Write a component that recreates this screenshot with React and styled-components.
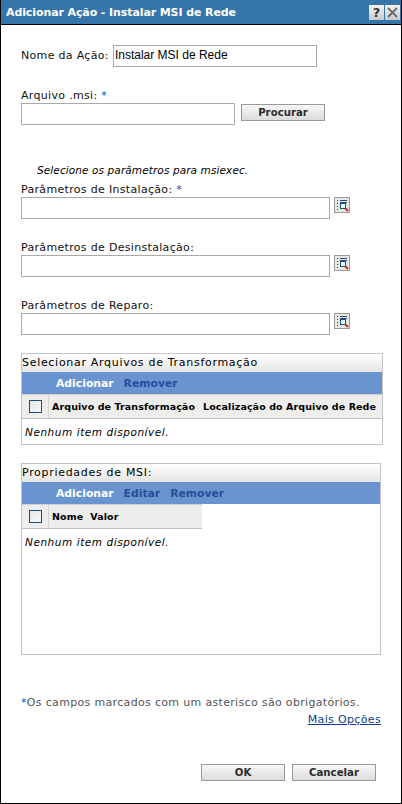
import React from 'react';
import styled, { createGlobalStyle } from 'styled-components';

const GlobalStyle = createGlobalStyle`
  html, body {
    margin: 0;
    padding: 0;
    background: #fff;
  }
  body {
    font-family: "DejaVu Sans", Verdana, sans-serif;
    font-size: 11px;
    color: #000;
  }
`;

const Dialog = styled.div`
  box-sizing: border-box;
  width: 402px;
  height: 804px;
  border: solid #000;
  border-width: 0 1px 1px 1px;
  background: #fff;
  display: flex;
  flex-direction: column;
`;

const TitleBar = styled.div`
  height: 24px;
  background: #3675a9;
  border-bottom: 1px solid #000;
  display: flex;
  align-items: center;
  justify-content: space-between;
  padding: 0 1px 0 5px;
  flex: none;
`;

const Title = styled.div`
  color: #fff;
  font-weight: bold;
  font-size: 11px;
  letter-spacing: -0.1px;
`;

const TitleButtons = styled.div`
  display: flex;
  gap: 1px;
`;

const TitleButton = styled.div`
  width: 15px;
  height: 15px;
  background: linear-gradient(#f4f4f4, #c9c9c9);
  display: flex;
  align-items: center;
  justify-content: center;
  color: #333;
  font-weight: bold;
  font-size: 13px;
`;

const Content = styled.div`
  flex: 1;
  padding: 20px 20px 0 20px;
  display: flex;
  flex-direction: column;
`;

const NameRow = styled.div`
  display: flex;
  align-items: center;
  gap: 4px;
  height: 22px;
`;

const Label = styled.div`
  line-height: 14px;
  height: 14px;
  margin-top: ${(p) => p.$top || 0}px;
  letter-spacing: 0.32px;
  color: #111;
`;

const Star = styled.span`
  color: #0a4fc4;
`;

const Input = styled.input`
  box-sizing: border-box;
  display: block;
  width: ${(p) => p.$width}px;
  height: 22px;
  border: 1px solid #a9a9a9;
  padding: 0 1px 3px;
  margin: 0;
  background: #fff;
  font-family: "Liberation Sans", Arial, sans-serif;
  font-size: 12px;
  color: #000;
  outline: none;
`;

const FieldRow = styled.div`
  display: flex;
  align-items: flex-start;
  gap: ${(p) => p.$gap || 4}px;
`;

const Button = styled.button`
  box-sizing: border-box;
  width: 84px;
  height: 17px;
  margin: ${(p) => p.$top || 0}px 0 0 0;
  padding: 0;
  border: 1px solid #999;
  background: linear-gradient(#f7f7f7, #dcdcdc);
  font-family: "DejaVu Sans", Verdana, sans-serif;
  font-size: 10.2px;
  font-weight: bold;
  color: #2c2c2c;
`;

const Hint = styled.div`
  font-style: italic;
  font-size: 10.5px;
  line-height: 14px;
  margin: 38px 0 6px 16px;
  letter-spacing: 0.1px;
`;

const Panel = styled.div`
  box-sizing: border-box;
  width: ${(p) => p.$width}px;
  height: ${(p) => p.$height}px;
  margin-top: ${(p) => p.$top}px;
  border: 1px solid #c4c4c4;
`;

const PanelTitle = styled.div`
  height: 18px;
  line-height: 18px;
  background: linear-gradient(#fff, #e4e4e2);
  letter-spacing: 0.7px;
  font-size: 11px;
`;

const ActionBar = styled.div`
  height: 22px;
  background: #6a94cf;
  display: flex;
  align-items: center;
  gap: 10px;
  padding-left: 34px;
  font-weight: bold;
  font-size: 10.8px;
`;

const Action = styled.span`
  color: ${(p) => (p.$active ? '#fff' : '#23509c')};
`;

const HeadRow = styled.div`
  box-sizing: border-box;
  width: ${(p) => p.$width || '100%'};
  height: 25px;
  display: flex;
  align-items: center;
  background: #ededeb;
  border-top: 1px solid #d0d0d0;
  border-bottom: 1px solid #c4c4c4;
  font-weight: bold;
  font-size: 9.5px;
  color: #000;
`;

const CheckCell = styled.div`
  box-sizing: border-box;
  width: 27px;
  height: 100%;
  flex: none;
  display: flex;
  align-items: center;
  justify-content: center;
  padding-left: 1px;
  border-right: 1px solid #d6d6d6;
`;

const CheckBox = styled.div`
  box-sizing: border-box;
  width: 13px;
  height: 13px;
  border: 1px solid #1f4e7a;
  background: linear-gradient(135deg, #e6e6e6, #f8f8f8);
`;

const HeadCell = styled.div`
  padding-left: 3px;
  margin-right: ${(p) => p.$gap || 0}px;
  white-space: nowrap;
  letter-spacing: 0.1px;
`;

const EmptyRow = styled.div`
  font-style: italic;
  font-size: 10.5px;
  padding: 6px 3px;
  line-height: 14px;
  letter-spacing: 0.55px;
`;

const Note = styled.div`
  margin-top: 41px;
  line-height: 14px;
  color: #555;
  letter-spacing: 0.33px;
`;

const LinkRow = styled.div`
  display: flex;
  justify-content: flex-end;
  width: 360px;
  margin-top: 3px;
`;

const MoreLink = styled.a`
  color: #0b3d91;
  text-decoration: underline;
  line-height: 14px;
  letter-spacing: 0.35px;
`;

const Footer = styled.div`
  display: flex;
  justify-content: flex-end;
  gap: 7px;
  width: 355px;
  margin-top: 37px;
`;

function LookupIcon() {
  return (
    <svg width="16" height="16" viewBox="0 0 16 16">
      <rect x="0.5" y="0.5" width="15" height="15" fill="#e9e9e3" stroke="#9a9a9a" />
      <path d="M3 3.5h1M3 6.5h1M3 9.5h1M3 12.5h1" stroke="#333" />
      <path d="M6 3.5h7M6 5.5h7" stroke="#2b4a7a" />
      <rect x="6.5" y="6.5" width="5" height="5" fill="#dff" stroke="#1f4e7a" />
      <path d="M11 11l3 3" stroke="#d0202a" strokeWidth="2" />
    </svg>
  );
}

function CloseIcon() {
  return (
    <svg width="11" height="11" viewBox="0 0 11 11">
      <path d="M1 1l9 9M10 1l-9 9" stroke="#6a6a6a" strokeWidth="1.8" />
    </svg>
  );
}

function Field({ label, required, top }) {
  return (
    <>
      <Label $top={top}>
        {label}
        {required && <Star> *</Star>}
      </Label>
      <FieldRow>
        <Input $width={309} />
        <LookupIcon />
      </FieldRow>
    </>
  );
}

export default function App() {
  return (
    <>
      <GlobalStyle />
      <Dialog>
        <TitleBar>
          <Title>Adicionar Ação - Instalar MSI de Rede</Title>
          <TitleButtons>
            <TitleButton>?</TitleButton>
            <TitleButton>
              <CloseIcon />
            </TitleButton>
          </TitleButtons>
        </TitleBar>
        <Content>
          <NameRow>
            <Label>Nome da Ação:</Label>
            <Input $width={204} defaultValue="Instalar MSI de Rede" />
          </NameRow>
          <Label $top={22}>
            Arquivo .msi:<Star> *</Star>
          </Label>
          <FieldRow $gap={6}>
            <Input $width={214} />
            <Button $top={1}>Procurar</Button>
          </FieldRow>
          <Hint>Selecione os parâmetros para msiexec.</Hint>
          <Field label="Parâmetros de Instalação:" required />
          <Field label="Parâmetros de Desinstalação:" top={22} />
          <Field label="Parâmetros de Reparo:" top={22} />

          <Panel $width={362} $height={92} $top={18}>
            <PanelTitle>Selecionar Arquivos de Transformação</PanelTitle>
            <ActionBar>
              <Action $active>Adicionar</Action>
              <Action>Remover</Action>
            </ActionBar>
            <HeadRow>
              <CheckCell>
                <CheckBox />
              </CheckCell>
              <HeadCell $gap={5}>Arquivo de Transformação</HeadCell>
              <HeadCell>Localização do Arquivo de Rede</HeadCell>
            </HeadRow>
            <EmptyRow>Nenhum item disponível.</EmptyRow>
          </Panel>

          <Panel $width={360} $height={192} $top={18}>
            <PanelTitle>Propriedades de MSI:</PanelTitle>
            <ActionBar>
              <Action $active>Adicionar</Action>
              <Action>Editar</Action>
              <Action>Remover</Action>
            </ActionBar>
            <HeadRow $width="180px">
              <CheckCell>
                <CheckBox />
              </CheckCell>
              <HeadCell $gap={4}>Nome</HeadCell>
              <HeadCell>Valor</HeadCell>
            </HeadRow>
            <EmptyRow>Nenhum item disponível.</EmptyRow>
          </Panel>

          <Note>
            <Star>*</Star>Os campos marcados com um asterisco são obrigatórios.
          </Note>
          <LinkRow>
            <MoreLink href="#">Mais Opções</MoreLink>
          </LinkRow>
          <Footer>
            <Button>OK</Button>
            <Button>Cancelar</Button>
          </Footer>
        </Content>
      </Dialog>
    </>
  );
}
